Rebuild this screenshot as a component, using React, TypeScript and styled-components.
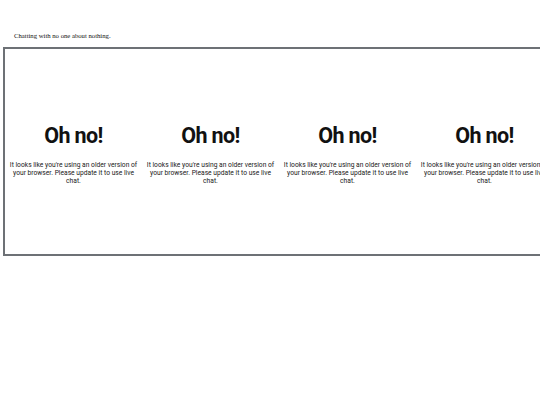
import React from "react";
import styled, { createGlobalStyle } from "styled-components";

const Global = createGlobalStyle`
  html, body { margin: 0; padding: 0; background: #fff; overflow: hidden; }
  body { width: 540px; height: 405px; }
`;

const Page = styled.div`
  display: flex;
  flex-direction: column;
  padding-left: 3px;
`;

const Caption = styled.p`
  margin: 32px 0 0 11px;
  font-family: "Liberation Serif", "Times New Roman", serif;
  font-size: 6.7px;
  line-height: 8px;
  color: #111;
  height: 15px;
`;

const Frame = styled.div`
  box-sizing: border-box;
  width: 560px;
  height: 209px;
  padding-top: 74px;
  border: 2px solid #6d7176;
  border-right: none;
  display: flex;
  align-items: flex-start;
  overflow: hidden;
`;

const Column = styled.div`
  flex: 0 0 137px;
  width: 137px;
  display: flex;
  flex-direction: column;
  align-items: center;
  text-align: center;
  font-family: Roboto, "Noto Sans", sans-serif;
  color: #111;
`;

const Heading = styled.h1`
  margin: 0 0 12px;
  font-size: 21.5px;
  line-height: 26px;
  font-weight: 700;
  letter-spacing: -0.6px;
  color: #111;
`;

const Message = styled.p`
  margin: 0;
  font-size: 6.7px;
  line-height: 8px;
  width: 132px;
  color: #1a1a1a;
`;

export default function App() {
  return (
    <>
      <Global />
      <Page>
        <Caption>Chatting with no one about nothing.</Caption>
        <Frame>
          {[0, 1, 2, 3].map((i) => (
            <Column key={i}>
              <Heading>Oh no!</Heading>
              <Message>
                It looks like you're using an older version of your browser. Please update it to use live chat.
              </Message>
            </Column>
          ))}
        </Frame>
      </Page>
    </>
  );
}
